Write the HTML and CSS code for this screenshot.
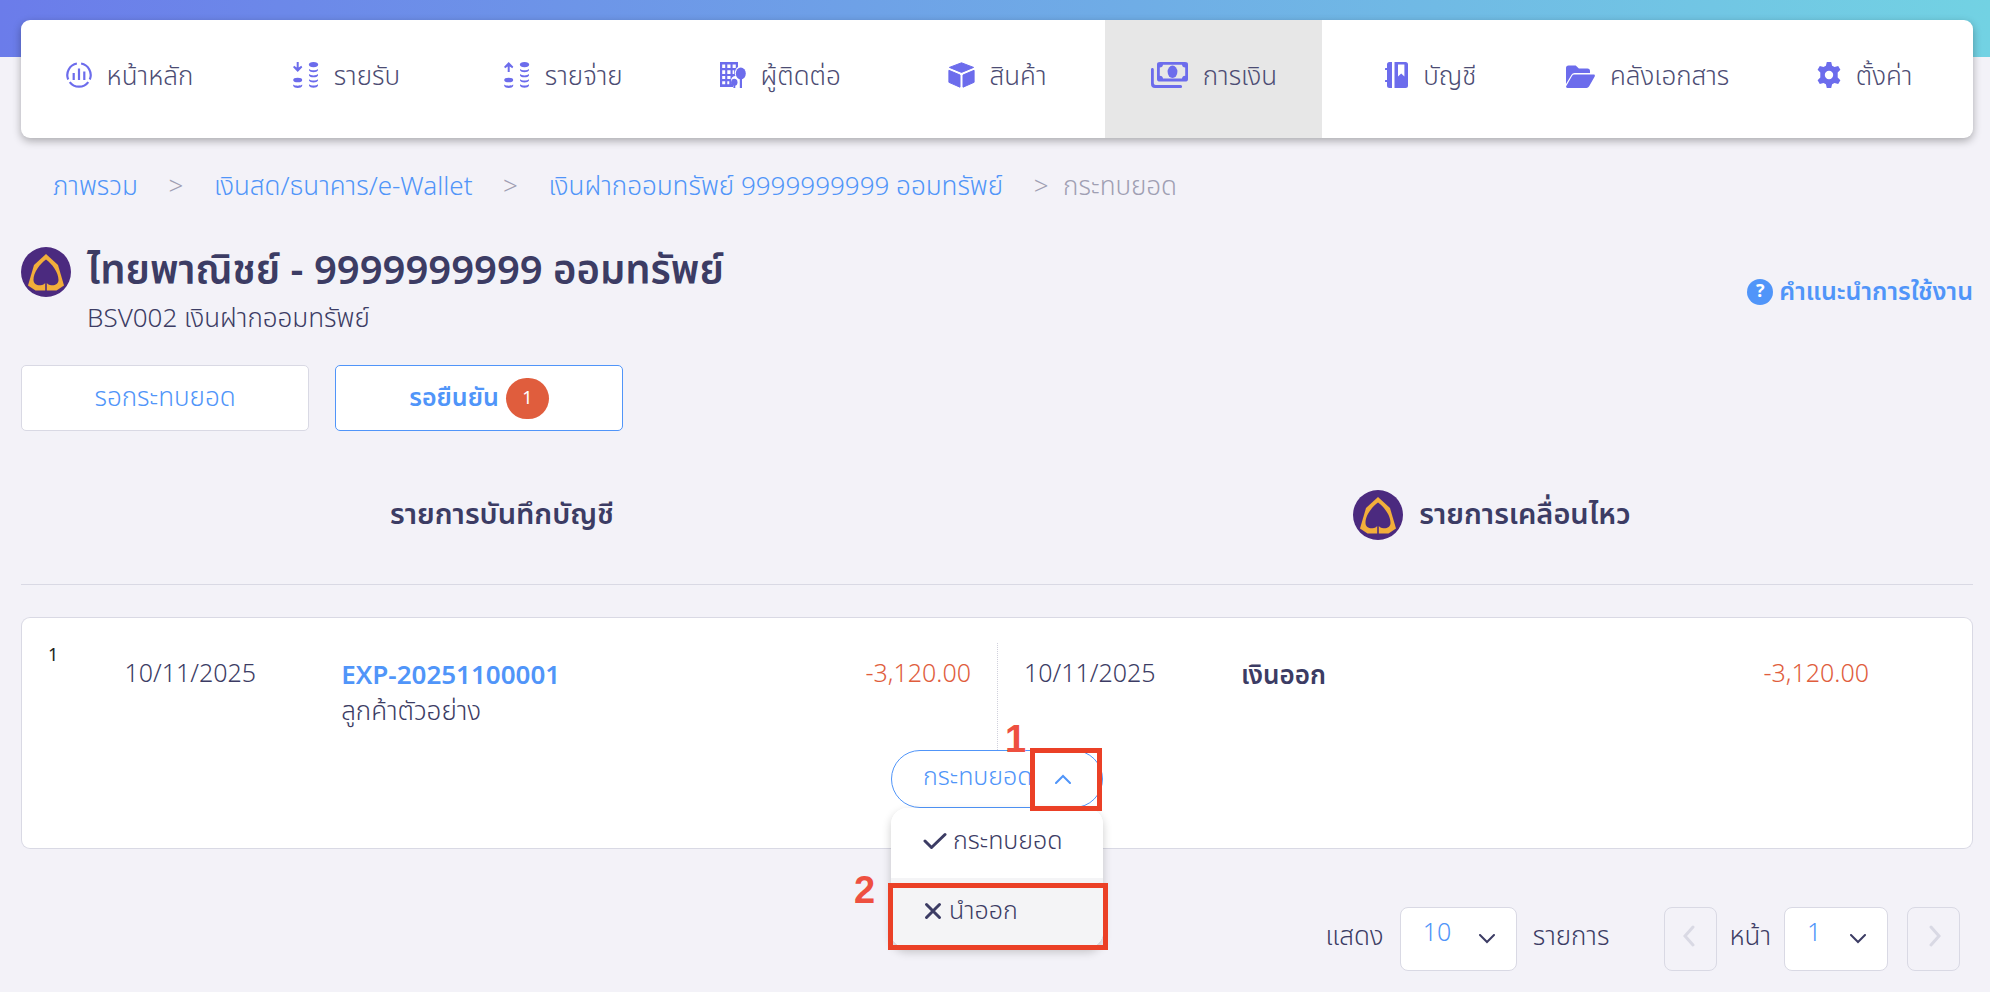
FILE: index.html
```
<!DOCTYPE html>
<html lang="th">
<head>
  <meta charset="UTF-8">
  <meta name="viewport" content="width=device-width, initial-scale=1.0">
  <title>กระทบยอด</title>
  <link rel="stylesheet" href="styles.css">
</head>
<body>
  <!-- shared shapes -->
  <svg class="defs" aria-hidden="true">
    <symbol id="bank-logo" viewBox="0 0 50 50">
      <circle cx="25" cy="25" r="25" fill="#4b2a7f"/>
      <path d="M25 7 37 18 43 38.500 35.500 43.500H14.500L7 38.500 13 18z" fill="#f2ae3a"/>
      <path d="M25 12.500C31 17 37.500 25 37.500 33c0 4-3.500 5.500-7 5.200-2.200-.2-4-1.200-4.700-2.200v8h-1.600v-8c-.7 1-2.500 2-4.700 2.200-3.500.3-7-1.200-7-5.200 0-8 6.500-16 12.500-20.500z" fill="#4b2a7f"/>
    </symbol>
    <symbol id="coins" viewBox="0 0 26 26">
      <ellipse cx="4.700" cy="18" rx="4.500" ry="2.300"/>
      <path d="M.2 22.500c1.500 1.600 7.500 1.600 9 0v1.200c-.8 2.900-8.200 2.900-9 0z"/>
      <ellipse cx="20.500" cy="2.600" rx="4.600" ry="2.600"/>
      <path d="M16 7c1.500 1.700 7.500 1.700 9 0v1.300c-.8 2.600-8.200 2.600-9 0z"/>
      <path d="M16 12.100c1.500 1.700 7.500 1.700 9 0v1.300c-.8 2.600-8.200 2.600-9 0z"/>
      <path d="M16 17.200c1.500 1.700 7.500 1.700 9 0v1.300c-.8 2.600-8.200 2.600-9 0z"/>
      <path d="M16 22.300c1.500 1.700 7.500 1.700 9 0v1.300c-.8 2.900-8.200 2.900-9 0z"/>
    </symbol>
  </svg>

  <div class="top-bar"></div>
  <div class="page">
    <nav class="menu">
      <a href="#" class="menu-item">
        <svg width="26" height="26" viewBox="0 0 26 26" fill="none" stroke="currentColor" stroke-width="2.200">
          <path d="M10.900 1.500A11.700 11.700 0 0 0 2.200 17.500M15.100 1.500a11.700 11.700 0 0 1 8.700 16M3.700 20.100a11.700 11.700 0 0 0 18.600 0"/>
          <path d="M7.700 11v7M13 6.500V18M18.300 9.500V18"/>
        </svg>
        <span>หน้าหลัก</span>
      </a>
      <a href="#" class="menu-item">
        <svg width="26" height="26" viewBox="0 0 26 26" fill="currentColor">
          <path d="M3.700 0h2v5.500l2.600-1.700 1 1.400L4.700 10 .1 5.200l1-1.400 2.600 1.700z"/>
          <use href="#coins"/>
        </svg>
        <span>รายรับ</span>
      </a>
      <a href="#" class="menu-item">
        <svg width="26" height="26" viewBox="0 0 26 26" fill="currentColor">
          <path d="M3.700 10h2V4.500l2.600 1.700 1-1.400L4.700 0 .1 4.800l1 1.400 2.600-1.700z"/>
          <use href="#coins"/>
        </svg>
        <span>รายจ่าย</span>
      </a>
      <a href="#" class="menu-item">
        <svg width="26" height="26" viewBox="0 0 26 26" fill="currentColor">
          <path d="M0 0h18v5c-3 2-4 6-2.500 9-2.500 0-4.500 2-4.500 4.500 0 2 .8 3.500 2 4.500v2H0z"/>
          <path d="M2.200 2.500h3v3.600h-3zM7.300 2.500h3.200v3.600H7.300zM12.600 2.500h3.200v3.600h-3.200zM2.200 8.300h3v3.600h-3zM7.300 8.300h3.200v3.600H7.300zM12.600 8.300h1.600v3.600h-1.600zM2.200 14h3v3h-3zM7.300 14h3.200v3H7.300zM2.200 19.300h3v3h-3zM7.300 19.300h2v3h-2z" fill="#fff"/>
          <ellipse cx="20.800" cy="11.500" rx="5" ry="6"/>
          <path d="M19.800 15h2.200v11h-2.200z"/>
          <ellipse cx="14.300" cy="20.300" rx="3.200" ry="3.500"/>
          <path d="M13.400 22h1.900v4h-1.900z"/>
        </svg>
        <span>ผู้ติดต่อ</span>
      </a>
      <a href="#" class="menu-item">
        <svg width="27" height="26" viewBox="0 0 27 26" fill="currentColor" stroke="currentColor" stroke-linejoin="round">
          <path d="M13.500.8 25.600 5.400 13.500 10.400 1.400 5.400z"/>
          <path d="M.9 8.300 12 13v12.200L.9 20.300zM26.100 8.300 15 13v12.200l11.100-4.900z"/>
        </svg>
        <span>สินค้า</span>
      </a>
      <a href="#" class="menu-item active">
        <svg width="37" height="26" viewBox="0 0 37 26" fill="currentColor">
          <path fill-rule="evenodd" d="M9 0h25a3 3 0 0 1 3 3v18.500a3 3 0 0 1-3 3H9a3 3 0 0 1-3-3V3a3 3 0 0 1 3-3zm3 3.400a3.600 3.600 0 0 1-3.200 3.400v10.500a3.600 3.600 0 0 1 3.200 3.400h19a3.600 3.600 0 0 1 3.200-3.400V6.800A3.600 3.600 0 0 1 31 3.400z" transform="scale(1 .8)"/>
          <ellipse cx="21.500" cy="9.800" rx="4.900" ry="6.200"/>
          <path d="M1.400 6c.8 0 1.400.6 1.400 1.400V21c0 1.200.8 2 2 2h24.800a1.500 1.500 0 0 1 0 3H4a4 4 0 0 1-4-4V7.400C0 6.600.6 6 1.400 6z"/>
        </svg>
        <span>การเงิน</span>
      </a>
      <a href="#" class="menu-item">
        <svg width="23" height="26" viewBox="0 0 23 26" fill="currentColor">
          <path d="M4.500 0H7v26H4.500a2.500 2.500 0 0 1-2.500-2.500V20H.8a.9.900 0 0 1 0-2H2V8H.8a.9.900 0 0 1 0-2H2V2.500A2.500 2.500 0 0 1 4.500 0z"/>
          <path fill-rule="evenodd" d="M9.500 0h11A2.500 2.500 0 0 1 23 2.500v21a2.500 2.500 0 0 1-2.500 2.500h-11zM13 2.600V14.500l3.200-3 3.200 3V2.600z"/>
        </svg>
        <span>บัญชี</span>
      </a>
      <a href="#" class="menu-item">
        <svg width="29" height="26" viewBox="0 0 29 26" fill="currentColor">
          <path d="M2.500 3.500h7.200l3.200 3h8.600A2.500 2.500 0 0 1 24 9v2H8.500a3.500 3.500 0 0 0-3 1.700L0 22V6a2.500 2.500 0 0 1 2.500-2.500z"/>
          <path d="M8.300 12.500h19.400c1 0 1.500 1 1 1.900l-5.700 10.100a3 3 0 0 1-2.500 1.500H1.300c-1 0-1.500-1-1-1.900l5.700-10.200a2.700 2.700 0 0 1 2.300-1.400z"/>
        </svg>
        <span>คลังเอกสาร</span>
      </a>
      <a href="#" class="menu-item">
        <svg width="24" height="26" viewBox="0 0 24 26" fill="currentColor">
          <path fill-rule="evenodd" d="M9.800 0h4.400l.9 3.700 2.400 1.400 3.700-1.200 2.200 3.900-2.700 2.600v5.200l2.700 2.600-2.200 3.900-3.700-1.200-2.400 1.400-.9 3.700H9.800l-.9-3.700-2.400-1.400-3.700 1.200-2.200-3.900 2.700-2.600v-5.200L.6 7.800l2.200-3.900 3.700 1.200 2.400-1.400zM12 8.800a4.200 4.200 0 1 0 0 8.400 4.200 4.200 0 0 0 0-8.400z"/>
        </svg>
        <span>ตั้งค่า</span>
      </a>
    </nav>

    <div class="breadcrumb">
      <a href="#">ภาพรวม</a>
      <span class="sep">&gt;</span>
      <a href="#">เงินสด/ธนาคาร/e-Wallet</a>
      <span class="sep">&gt;</span>
      <a href="#">เงินฝากออมทรัพย์ 9999999999 ออมทรัพย์</a>
      <span class="sep last">&gt;</span>
      <span>กระทบยอด</span>
    </div>

    <header class="account">
      <svg class="bank" width="50" height="50"><use href="#bank-logo"/></svg>
      <div class="account-name">
        <h1>ไทยพาณิชย์ - 9999999999 ออมทรัพย์</h1>
        <p>BSV002 เงินฝากออมทรัพย์</p>
      </div>
      <a href="#" class="help"><span class="help-icon">?</span>คำแนะนำการใช้งาน</a>
    </header>

    <div class="tabs">
      <button type="button" class="tab">รอกระทบยอด</button>
      <button type="button" class="tab selected">รอยืนยัน <span class="badge">1</span></button>
    </div>

    <table class="match">
      <colgroup>
        <col class="col-no">
        <col class="col-date">
        <col class="col-name">
        <col class="col-amount">
        <col class="col-date2">
        <col class="col-name">
        <col>
      </colgroup>
      <thead>
        <tr>
          <th colspan="4" class="head-left">รายการบันทึกบัญชี</th>
          <th colspan="3" class="head-right">
            <div class="bank-head">
              <svg class="bank" width="50" height="50"><use href="#bank-logo"/></svg>
              รายการเคลื่อนไหว
            </div>
          </th>
        </tr>
      </thead>
      <tbody>
        <tr class="data">
          <td class="no">1</td>
          <td>10/11/2025</td>
          <td class="name"><a href="#" class="doc">EXP-20251100001</a><br>ลูกค้าตัวอย่าง</td>
          <td class="amount">-3,120.00</td>
          <td class="split"><div>10/11/2025</div></td>
          <td class="name type">เงินออก</td>
          <td class="amount end">-3,120.00</td>
        </tr>
        <tr class="action">
          <td colspan="7">
            <div class="dropdown">
              <div class="pill">
                <button type="button" class="pill-main">กระทบยอด</button>
                <button type="button" class="pill-toggle" aria-label="เปิดเมนู">
                  <svg width="16" height="10" viewBox="0 0 16 10" fill="none" stroke="currentColor" stroke-width="2" stroke-linecap="round"><path d="M1 9l7-7 7 7"/></svg>
                </button>
              </div>
              <div class="options">
                <button type="button">
                  <svg width="24" height="18" viewBox="0 0 24 18" fill="none" stroke="currentColor" stroke-width="3" stroke-linecap="round" stroke-linejoin="round"><path d="M2 9 8.500 15.500 22 2.500"/></svg>
                  กระทบยอด
                </button>
                <button type="button" class="hover">
                  <svg width="20" height="18" viewBox="0 0 20 18" fill="none" stroke="currentColor" stroke-width="3" stroke-linecap="round"><path d="M3.500 2.500l13 13M16.500 2.500l-13 13"/></svg>
                  นำออก
                </button>
              </div>
              <div class="mark mark-one"><b>1</b></div>
              <div class="mark mark-two"><b>2</b></div>
            </div>
          </td>
        </tr>
      </tbody>
    </table>

    <div class="pagination">
      <label for="size">แสดง</label>
      <div class="select size">
        <select id="size"><option>10</option><option>20</option><option>50</option></select>
        <svg width="16" height="10" viewBox="0 0 16 10" fill="none" stroke="currentColor" stroke-width="2" stroke-linecap="round"><path d="M1 1l7 7 7-7"/></svg>
      </div>
      <span class="unit">รายการ</span>
      <button type="button" class="step" disabled aria-label="ก่อนหน้า">
        <svg width="12" height="22" viewBox="0 0 12 22" fill="none" stroke="currentColor" stroke-width="3" stroke-linecap="round"><path d="M10 2 2 11l8 9"/></svg>
      </button>
      <label for="page">หน้า</label>
      <div class="select number">
        <select id="page"><option>1</option></select>
        <svg width="16" height="10" viewBox="0 0 16 10" fill="none" stroke="currentColor" stroke-width="2" stroke-linecap="round"><path d="M1 1l7 7 7-7"/></svg>
      </div>
      <button type="button" class="step next" disabled aria-label="ถัดไป">
        <svg width="12" height="22" viewBox="0 0 12 22" fill="none" stroke="currentColor" stroke-width="3" stroke-linecap="round"><path d="M2 2l8 9-8 9"/></svg>
      </button>
    </div>
  </div>
</body>
</html>
```
FILE: styles.css
```
* {
  box-sizing: border-box;
}
body {
  margin: 0;
  background-color: #f3f2f8;
  color: #3c3c64;
  font-family: "Noto Sans Thai", "Noto Sans", sans-serif;
  font-size: 26px;
  font-weight: 300;
  line-height: 36px;
}
a {
  color: #5095f9;
  text-decoration: none;
}
button, select {
  font: inherit;
  color: inherit;
  cursor: pointer;
}
.defs {
  position: absolute;
  width: 0;
  height: 0;
}
.top-bar {
  height: 57px;
  background: linear-gradient(90deg, #6b7cea, #72d2e3);
}
.page {
  margin: -37px 17px 0 21px;
}
.bank {
  flex: none;
}

/* main menu */
.menu {
  display: flex;
  height: 118px;
  background-color: #fff;
  border-radius: 9px;
  box-shadow: 0 3px 8px rgba(0, 0, 0, 0.3);
}
.menu-item {
  flex: 1;
  display: flex;
  justify-content: center;
  align-items: center;
  gap: 15px;
  padding-bottom: 8px;
  color: #4c4c73;
}
.menu-item svg {
  color: #6c6cec;
}
.menu-item span {
  padding-top: 4px;
}
.menu-item.active {
  background-color: #e7e7e7;
}

.breadcrumb {
  display: flex;
  margin-top: 31px;
  padding-left: 32px;
  color: #a09fb3;
}
.breadcrumb .sep {
  width: 76px;
  text-align: center;
}
.breadcrumb .sep.last {
  width: 60px;
  padding-left: 16px;
}

/* account title */
.account {
  display: flex;
  margin-top: 36px;
}
.account .bank {
  margin-top: 6px;
}
.account-name {
  flex: 1;
  margin-left: 16px;
}
.account h1 {
  margin: 0;
  font-size: 40px;
  font-weight: 600;
  line-height: 62px;
}
.account p {
  margin: 0;
  line-height: 32px;
}
.help {
  display: flex;
  align-items: center;
  gap: 6px;
  height: 102px;
  font-size: 25px;
  font-weight: 600;
}
.help-icon {
  width: 26px;
  height: 26px;
  border-radius: 13px;
  background-color: #5095f9;
  color: #fff;
  font-size: 18px;
  font-weight: 700;
  line-height: 26px;
  text-align: center;
}

.tabs {
  display: flex;
  gap: 26px;
  margin-top: 22px;
}
.tab {
  display: flex;
  justify-content: center;
  align-items: center;
  gap: 7px;
  width: 288px;
  height: 66px;
  padding: 0;
  border: 1px solid #d9d9e4;
  border-radius: 5px;
  background-color: #fff;
  color: #5095f9;
}
.tab.selected {
  border-color: #5095f9;
  font-size: 25px;
  font-weight: 600;
}
.badge {
  width: 43px;
  height: 41px;
  border-radius: 21px;
  background-color: #e05d3d;
  color: #fff;
  font-size: 18px;
  font-weight: 400;
  line-height: 41px;
}

/* matching table */
.match {
  width: 100%;
  margin-top: 25px;
  table-layout: fixed;
  border-spacing: 0;
  font-size: 25px;
}
.col-no { width: 5.3%; }
.col-date { width: 11.1%; }
.col-name { width: 20.5%; }
.col-amount { width: 13.1%; }
.col-date2 { width: 12.5%; }
.match th {
  height: 129px;
  padding: 0 0 10px;
  border-bottom: 1px solid #d9d9e4;
  font-size: 29px;
  font-weight: 600;
}
.match .head-left {
  padding-right: 14px;
}
.match .head-right {
  padding-left: 14px;
}
.bank-head {
  display: flex;
  justify-content: center;
  align-items: center;
  gap: 16px;
}
.match tbody::before {
  content: "";
  display: block;
  height: 32px;
}
.match td {
  padding: 0;
  background-color: #fff;
  vertical-align: top;
}
.data td {
  height: 133px;
  padding-top: 38px;
  border-top: 1px solid #d9d9e4;
}
.data td:first-child {
  border-left: 1px solid #d9d9e4;
  border-top-left-radius: 9px;
}
.data td:last-child {
  border-right: 1px solid #d9d9e4;
  border-top-right-radius: 9px;
}
.data .no {
  padding: 20px 0 0 26px;
  color: #222;
  font-size: 18px;
  font-weight: 400;
}
.data .name {
  padding-top: 40px;
  font-size: 26px;
}
.doc {
  font-weight: 600;
}
.data .type {
  font-weight: 600;
}
.data .amount {
  padding-right: 26px;
  color: #e05d3d;
  text-align: right;
}
.data .amount.end {
  padding-right: 103px;
}
.data .split {
  padding-top: 25px;
}
.split div {
  height: 107px;
  padding: 13px 0 0 26px;
  border-left: 1px dotted #d0d0dc;
}
.action td {
  height: 99px;
  border: 1px solid #d9d9e4;
  border-top: 0;
  border-radius: 0 0 9px 9px;
}

/* split button and its menu */
.dropdown {
  position: relative;
  width: 212px;
  margin: 0 auto;
}
.pill {
  display: flex;
  height: 58px;
  border: 1px solid #5095f9;
  border-radius: 29px;
  background-color: #fff;
  color: #5095f9;
}
.pill button {
  padding: 0;
  border: 0;
  background: none;
}
.pill .pill-main {
  flex: 1;
  min-width: 0;
  padding: 0 0 4px 31px;
  text-align: left;
  white-space: nowrap;
}
.pill .pill-toggle {
  width: 78px;
  padding-bottom: 6px;
}
.options {
  position: absolute;
  top: 58px;
  left: 0;
  width: 100%;
  overflow: hidden;
  border-radius: 16px;
  background-color: #fff;
  box-shadow: 0 4px 10px rgba(0, 0, 0, 0.2);
}
.options button {
  display: flex;
  align-items: center;
  gap: 6px;
  width: 100%;
  height: 70px;
  padding: 0 0 4px 32px;
  border: 0;
  background-color: #fff;
}
.options button.hover {
  background-color: #f4f4f6;
}

/* step markers */
.mark {
  position: absolute;
  border: 5px solid #eb4026;
}
.mark b {
  position: absolute;
  color: #ee5040;
  font-family: "Liberation Sans", sans-serif;
  font-size: 38px;
  font-weight: 700;
}
.mark-one {
  top: -2px;
  left: 139px;
  width: 72px;
  height: 63px;
}
.mark-one b {
  top: -32px;
  left: -30px;
}
.mark-two {
  top: 133px;
  left: -3px;
  width: 220px;
  height: 67px;
}
.mark-two b {
  top: -16px;
  left: -39px;
}

.pagination {
  display: flex;
  justify-content: flex-end;
  align-items: center;
  margin: 58px 13px 0 0;
}
.pagination label, .unit {
  padding-bottom: 4px;
}
.select {
  position: relative;
  margin: 0 16px;
}
.select select {
  width: 100%;
  height: 64px;
  padding: 0 0 12px 22px;
  border: 1px solid #d9d9e4;
  border-radius: 8px;
  background-color: #fff;
  color: #5095f9;
  font-size: 25px;
  appearance: none;
}
.select svg {
  position: absolute;
  top: 27px;
  right: 22px;
  pointer-events: none;
}
.select.size {
  width: 117px;
}
.select.number {
  width: 104px;
  margin: 0 19px 0 13px;
}
.unit {
  margin-right: 55px;
}
.step {
  display: flex;
  justify-content: center;
  align-items: center;
  width: 53px;
  height: 64px;
  margin-right: 12px;
  padding: 0 3px 6px 0;
  border: 1px solid #d9d9e4;
  border-radius: 8px;
  background: none;
  color: #d9d9e4;
}
.step.next {
  margin-right: 0;
  padding: 0 0 6px 3px;
}
```
